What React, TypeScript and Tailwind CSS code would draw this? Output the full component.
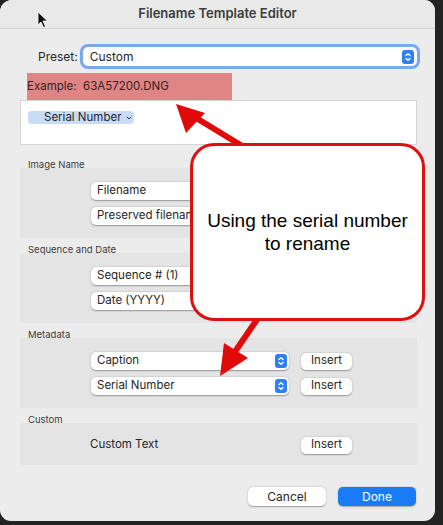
import { ChevronDown } from 'lucide-react';

const ui = { fontFamily: 'Inter, "Noto Sans", sans-serif' };

function Stepper() {
  return (
    <span className="flex h-[14px] w-[12px] items-center justify-center rounded-[3px] bg-[#2f7ff6]">
      <svg width="8" height="10" viewBox="0 0 8 10" fill="none" stroke="white" strokeWidth="1.4" strokeLinecap="round" strokeLinejoin="round">
        <path d="M2 3.6 4 1.8 6 3.6" />
        <path d="M2 6.4 4 8.2 6 6.4" />
      </svg>
    </span>
  );
}

function PopUp({ label }: { label: string }) {
  return (
    <div className="flex h-[18px] w-[198px] items-center justify-between rounded-[5px] bg-white pl-[6px] pr-[2px] text-[11.5px] text-[#262626] shadow-[0_0.5px_1.5px_rgba(0,0,0,0.35)]">
      <span>{label}</span>
      <Stepper />
    </div>
  );
}

function InsertButton() {
  return (
    <button className="flex h-[17px] w-[51px] items-center justify-center rounded-[5px] bg-white text-[11.5px] text-[#262626] shadow-[0_0.5px_1.5px_rgba(0,0,0,0.35)]">
      Insert
    </button>
  );
}

function SectionTitle({ title }: { title: string }) {
  return <div className="h-[15px] pl-[8px] pt-[8px] text-[9.5px] leading-[8px] text-[#3a3a3a]">{title}</div>;
}

function Section({ title, rows }: { title: string; rows: string[] }) {
  return (
    <div>
      <SectionTitle title={title} />
      <div className="flex h-[70px] flex-col gap-[7px] bg-[#e4e4e4] pl-[71px] pt-[14px]">
        {rows.map((r) => (
          <div key={r} className="flex items-center gap-[12px]">
            <PopUp label={r} />
            <InsertButton />
          </div>
        ))}
      </div>
    </div>
  );
}

export default function App() {
  return (
    <div className="h-[525px] w-[443px] bg-[#222322]" style={ui}>
      <div className="relative h-[521px] w-[435px] overflow-hidden rounded-[11px] rounded-tl-[12px] bg-[#ececec]">
        {/* title bar */}
        <div className="flex h-[29px] items-center justify-center border-b border-[#d3d3d3] bg-[#e9e9e9] text-[13px] font-semibold text-[#3c3c3c]">
          Filename Template Editor
        </div>

        <div className="pl-[20px] pr-[18px]">
          {/* preset */}
          <div className="mt-[18px] flex items-center gap-[5px] pl-[18px]">
            <span className="text-[12px] text-[#262626]">Preset:</span>
            <div className="flex h-[19px] flex-1 items-center justify-between rounded-[5px] bg-white pl-[7px] pr-[3px] text-[12px] text-[#262626] ring-[3px] ring-[#7aa8ee]">
              <span>Custom</span>
              <Stepper />
            </div>
          </div>

          {/* example */}
          <div className="ml-[7px] mt-[7px] flex h-[27px] w-[205px] items-center bg-[#e08585] text-[11.5px] text-[#3a1e1e]">
            Example:&nbsp;&nbsp;63A57200.DNG
          </div>

          {/* token field */}
          <div className="h-[45px] border border-[#d5d5d5] bg-white pl-[7px] pt-[2px]">
            <span className="inline-flex h-[13px] w-[106px] items-center gap-[4px] rounded-[4px] bg-[#c8dcf8] pl-[16px] text-[11.5px] text-[#262626]">
              Serial Number
              <ChevronDown size={8} strokeWidth={3} className="text-[#333]" />
            </span>
          </div>

          <div className="mt-[8px]">
            <Section title="Image Name" rows={['Filename', 'Preserved filename']} />
            <Section title="Sequence and Date" rows={['Sequence # (1)', 'Date (YYYY)']} />
            <Section title="Metadata" rows={['Caption', 'Serial Number']} />
            <div>
              <SectionTitle title="Custom" />
              <div className="flex h-[42px] items-center bg-[#e4e4e4] pl-[70px] pt-[2px]">
                <span className="w-[211px] text-[11.5px] text-[#262626]">Custom Text</span>
                <InsertButton />
              </div>
            </div>
          </div>

          {/* footer */}
          <div className="mt-[22px] flex justify-end gap-[12px] pr-[1px]">
            <button className="flex h-[19px] w-[78px] items-center justify-center rounded-[5px] bg-white text-[12px] text-[#262626] shadow-[0_0.5px_1.5px_rgba(0,0,0,0.35)]">
              Cancel
            </button>
            <button className="flex h-[19px] w-[78px] items-center justify-center rounded-[5px] bg-[#1a7cf5] text-[12px] text-white shadow-[0_0.5px_1.5px_rgba(0,0,0,0.3)]">
              Done
            </button>
          </div>
        </div>

        {/* cursor */}
        <svg className="absolute left-[37px] top-[11px]" width="12" height="18" viewBox="0 0 12 18">
          <path d="M1 1 L1 14 L4 11 L6.5 16.5 L8.5 15.5 L6 10 L10.5 10 Z" fill="#111" stroke="#fff" strokeWidth="0.8" />
        </svg>

        {/* callout arrows */}
        <svg className="absolute left-0 top-0" width="435" height="521" viewBox="0 0 435 521">
          <line x1="252" y1="152" x2="188" y2="113" stroke="#e00a0a" strokeWidth="6" />
          <polygon points="176,104 205,113 186,133" fill="#e00a0a" />
          <line x1="258" y1="318" x2="228" y2="362" stroke="#e00a0a" strokeWidth="6" />
          <polygon points="220,376 224,343 248,358" fill="#e00a0a" />
        </svg>

        {/* callout */}
        <div className="absolute left-[190px] top-[143px] flex h-[178px] w-[235px] items-center justify-center rounded-[24px] border-[3px] border-[#dd1111] bg-white">
          <p className="text-center text-[19px] leading-[23px] text-black" style={{ fontFamily: '"Liberation Sans", Arial, sans-serif' }}>
            Using the serial number
            <br />
            to rename
          </p>
        </div>
      </div>
    </div>
  );
}
